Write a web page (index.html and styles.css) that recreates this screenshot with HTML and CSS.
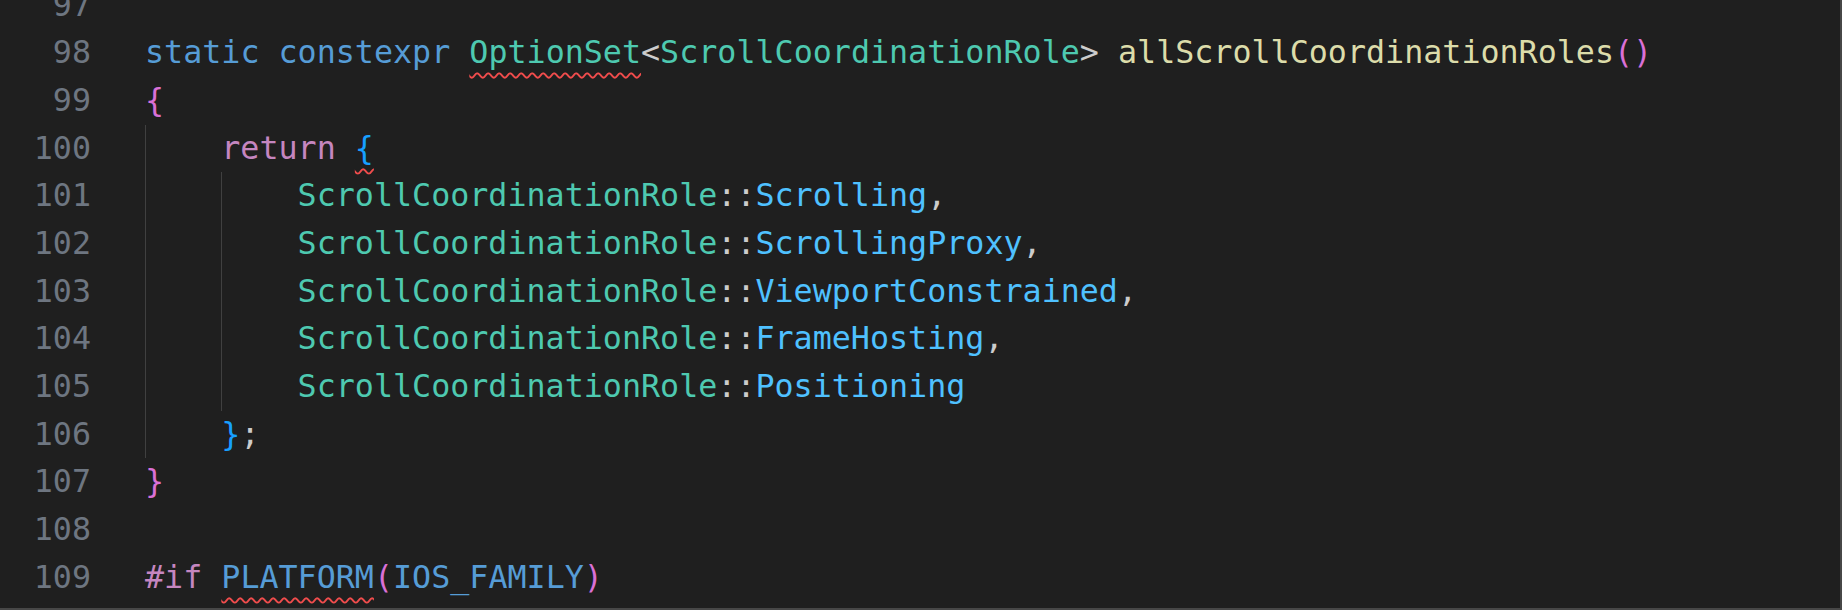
FILE: index.html
```html
<!DOCTYPE html>
<html lang="en">
<head>
<meta charset="utf-8">
<title>Editor</title>
<link rel="stylesheet" href="styles.css">
</head>
<body>
<div class="editor">
  <div class="lines">
    <div class="line"><span class="ln">97</span><span class="code"></span></div>
    <div class="line"><span class="ln">98</span><span class="code"><span class="kw">static</span> <span class="kw">constexpr</span> <span class="ty sq">OptionSet</span><span class="pn">&lt;</span><span class="ty">ScrollCoordinationRole</span><span class="pn">&gt;</span> <span class="fn">allScrollCoordinationRoles</span><span class="b1">()</span></span></div>
    <div class="line"><span class="ln">99</span><span class="code"><span class="b1">{</span></span></div>
    <div class="line"><span class="ln">100</span><span class="code"><span class="ind"></span><span class="ctl">return</span> <span class="b2 sq">{</span></span></div>
    <div class="line"><span class="ln">101</span><span class="code"><span class="ind"></span><span class="ind"></span><span class="ty">ScrollCoordinationRole</span><span class="pn">::</span><span class="em">Scrolling</span><span class="pn">,</span></span></div>
    <div class="line"><span class="ln">102</span><span class="code"><span class="ind"></span><span class="ind"></span><span class="ty">ScrollCoordinationRole</span><span class="pn">::</span><span class="em">ScrollingProxy</span><span class="pn">,</span></span></div>
    <div class="line"><span class="ln">103</span><span class="code"><span class="ind"></span><span class="ind"></span><span class="ty">ScrollCoordinationRole</span><span class="pn">::</span><span class="em">ViewportConstrained</span><span class="pn">,</span></span></div>
    <div class="line"><span class="ln">104</span><span class="code"><span class="ind"></span><span class="ind"></span><span class="ty">ScrollCoordinationRole</span><span class="pn">::</span><span class="em">FrameHosting</span><span class="pn">,</span></span></div>
    <div class="line"><span class="ln">105</span><span class="code"><span class="ind"></span><span class="ind"></span><span class="ty">ScrollCoordinationRole</span><span class="pn">::</span><span class="em">Positioning</span></span></div>
    <div class="line"><span class="ln">106</span><span class="code"><span class="ind"></span><span class="b2">}</span><span class="pn">;</span></span></div>
    <div class="line"><span class="ln">107</span><span class="code"><span class="b1">}</span></span></div>
    <div class="line"><span class="ln">108</span><span class="code"></span></div>
    <div class="line"><span class="ln">109</span><span class="code"><span class="ctl">#if</span> <span class="kw sq">PLATFORM</span><span class="b1">(</span><span class="kw">IOS_FAMILY</span><span class="b1">)</span></span></div>
  </div>
</div>
</body>
</html>
```
FILE: styles.css
```css
html, body {
  margin: 0;
  padding: 0;
  background: #1f1f1f;
}
.editor {
  width: 1842px;
  height: 610px;
  box-sizing: border-box;
  background: #1f1f1f;
  border-right: 2px solid #474747;
  border-bottom: 2px solid #474747;
  overflow: hidden;
  font-family: "DejaVu Sans Mono", "Liberation Mono", monospace;
  font-size: 31.7px;
  color: #cccccc;
}
.lines {
  margin-top: -18.5px;
  display: flex;
  flex-direction: column;
}
.line {
  display: flex;
  height: 47.7px;
  line-height: 47.7px;
  white-space: pre;
}
.ln {
  width: 91px;
  flex: none;
  text-align: right;
  color: #6e7681;
}
.code {
  margin-left: 54px;
  display: block;
  white-space: pre;
}
.ind {
  display: inline-block;
  width: 4ch;
  height: 47.7px;
  vertical-align: top;
  box-shadow: inset 1px 0 #404040;
}
.kw { color: #569cd6; }
.ty { color: #4ec9b0; }
.pn { color: #cccccc; }
.fn { color: #dcdcaa; }
.b1 { color: #da70d6; }
.b2 { color: #179fff; }
.ctl { color: #c586c0; }
.em { color: #4fc1ff; }
.sq {
  text-decoration: underline wavy #f14c4c;
  text-decoration-thickness: 2px;
  text-underline-offset: 9px;
  text-decoration-skip-ink: none;
}
```
